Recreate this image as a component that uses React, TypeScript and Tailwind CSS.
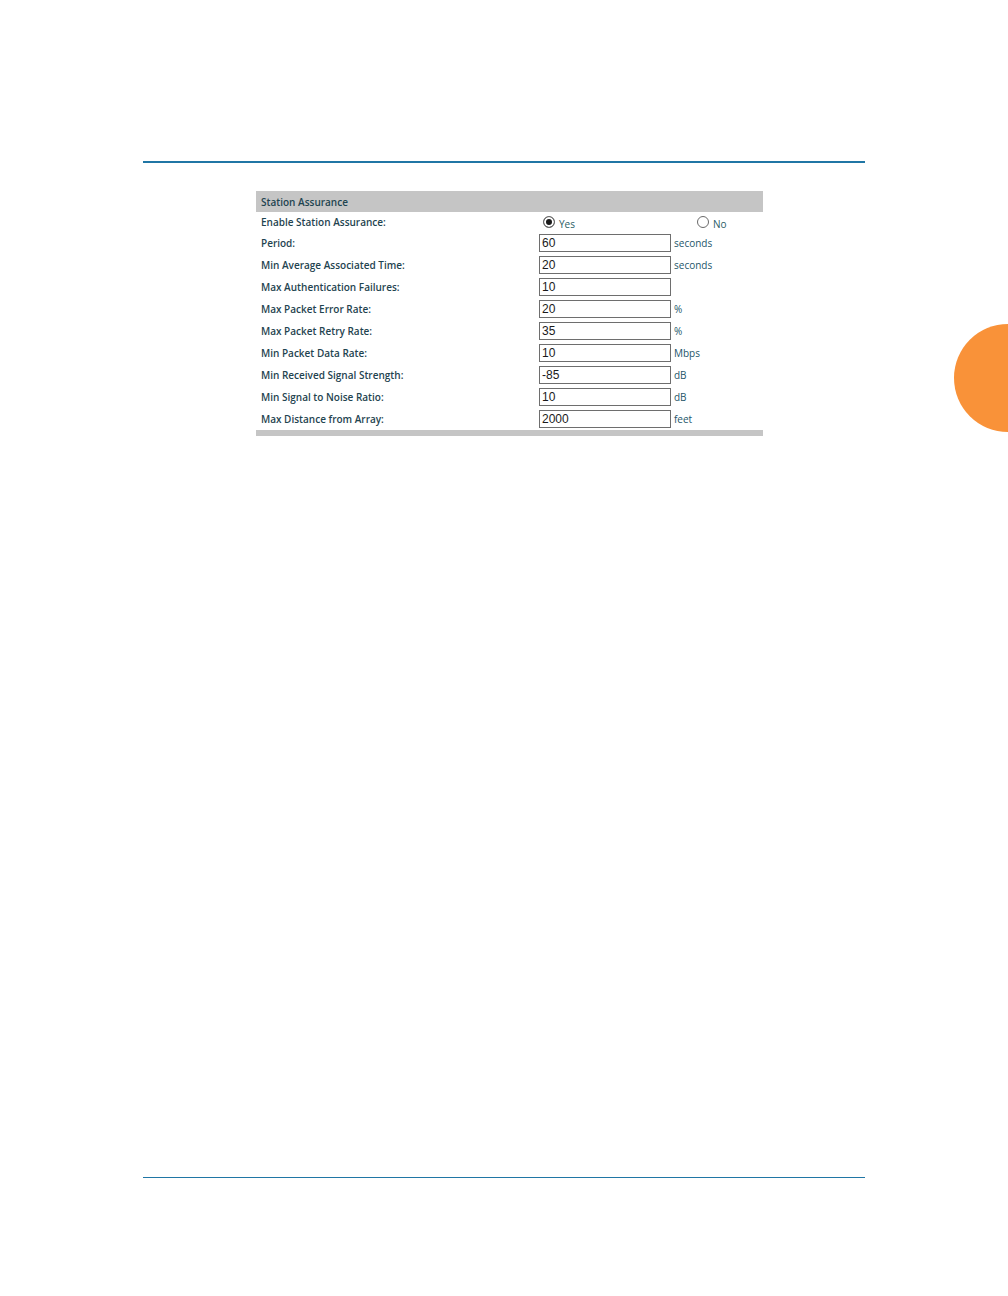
import React, { useState } from 'react';

interface Field {
  id: string;
  label: string;
  value: string;
  unit: string;
}

const initialFields: Field[] = [
  { id: 'period', label: 'Period:', value: '60', unit: 'seconds' },
  { id: 'min-assoc-time', label: 'Min Average Associated Time:', value: '20', unit: 'seconds' },
  { id: 'max-auth-failures', label: 'Max Authentication Failures:', value: '10', unit: '' },
  { id: 'max-error-rate', label: 'Max Packet Error Rate:', value: '20', unit: '%' },
  { id: 'max-retry-rate', label: 'Max Packet Retry Rate:', value: '35', unit: '%' },
  { id: 'min-data-rate', label: 'Min Packet Data Rate:', value: '10', unit: 'Mbps' },
  { id: 'min-signal', label: 'Min Received Signal Strength:', value: '-85', unit: 'dB' },
  { id: 'min-snr', label: 'Min Signal to Noise Ratio:', value: '10', unit: 'dB' },
  { id: 'max-distance', label: 'Max Distance from Array:', value: '2000', unit: 'feet' },
];

interface RadioProps {
  label: string;
  checked: boolean;
  onChange: () => void;
}

function Radio({ label, checked, onChange }: RadioProps) {
  return (
    <label className="flex items-center gap-1 pl-1 text-[#2a5d66]">
      <input
        type="radio"
        name="station-assurance"
        checked={checked}
        onChange={onChange}
        className="size-3 appearance-none rounded-full border border-[#6a6a6a] bg-white checked:bg-[#1a1a1a] checked:shadow-[inset_0_0_0_2px_#ffffff]"
      />
      <span className="pt-1">{label}</span>
    </label>
  );
}

function StationAssurance() {
  const [enabled, setEnabled] = useState(true);
  const [fields, setFields] = useState<Field[]>(initialFields);

  const handleUpdate = (index: number, value: string) => {
    const next = [...fields];
    next[index] = { ...next[index], value };
    setFields(next);
  };

  return (
    <form className="w-full max-w-[507px] border-b-6 border-[#c5c5c5] text-[10px] leading-4 text-[#24566a]">
      <h2 className="bg-[#c5c5c5] px-[5px] pt-[3px] pb-[2px] font-semibold text-[#1f4450]">Station Assurance</h2>

      <div role="radiogroup" aria-labelledby="enable-label" className="flex h-5 items-center">
        <span id="enable-label" className="w-[283px] shrink-0 pl-[5px] font-semibold text-[#1f4450]">
          Enable Station Assurance:
        </span>
        <div className="grid flex-1 grid-cols-[154px_1fr]">
          <Radio label="Yes" checked={enabled} onChange={() => setEnabled(true)} />
          <Radio label="No" checked={!enabled} onChange={() => setEnabled(false)} />
        </div>
      </div>

      {fields.map((field, i) => (
        <div key={field.id} className="flex h-[22px] items-center">
          <label htmlFor={field.id} className="w-[283px] shrink-0 pl-[5px] font-semibold text-[#1f4450]">
            {field.label}
          </label>
          <input
            id={field.id}
            type="text"
            value={field.value}
            onChange={(e) => handleUpdate(i, e.target.value)}
            className="h-[18px] w-[132px] border border-[#6e6e6e] bg-white px-[2px] font-['Liberation_Sans',sans-serif] text-[12px] text-[#1a1a1a] outline-none"
          />
          <span className="pl-[3px]">{field.unit}</span>
        </div>
      ))}
    </form>
  );
}

export default function App() {
  return (
    <div className="relative flex min-h-screen flex-col overflow-hidden bg-white px-[143px] pt-[161px] pb-[118px] font-['Open_Sans',sans-serif]">
      <main className="flex-1 border-t-2 border-[#2076a5] pt-7 pl-[113px]">
        <StationAssurance />
      </main>
      <footer className="h-px bg-[#2076a5]" />

      {/* Page edge tab */}
      <div className="absolute top-[324px] -right-[54px] size-[108px] rounded-full bg-[#f99239]" />
    </div>
  );
}
